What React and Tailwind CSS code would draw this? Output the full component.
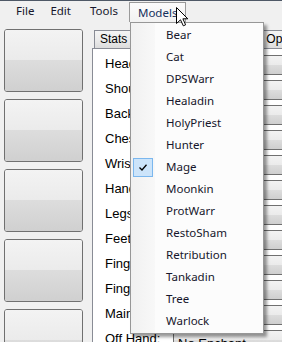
import React from "react";

const slots = [
  "Head:",
  "Shoulders:",
  "Back:",
  "Chest:",
  "Wrist:",
  "Hands:",
  "Legs:",
  "Feet:",
  "Finger 1:",
  "Finger 2:",
  "Main Hand:",
  "Off Hand:",
];

const models = [
  "Bear",
  "Cat",
  "DPSWarr",
  "Healadin",
  "HolyPriest",
  "Hunter",
  "Mage",
  "Moonkin",
  "ProtWarr",
  "RestoSham",
  "Retribution",
  "Tankadin",
  "Tree",
  "Warlock",
];

const uiFont = { fontFamily: '"Noto Sans", "Open Sans", sans-serif' };

// big empty buttons down the left side
const SideButton = () => (
  <div className="h-[63px] shrink-0 rounded-[3px] border border-[#707070] overflow-hidden flex flex-col">
    <div className="h-[30px] bg-gradient-to-b from-[#f3f3f3] to-[#ebebeb]" />
    <div className="flex-1 bg-gradient-to-b from-[#dddddd] to-[#d0d0d0]" />
  </div>
);

const Combo = ({ text }) => (
  <div className="relative h-[20px] w-[140px] shrink-0 rounded-[2px] border border-[#707070] overflow-hidden">
    <div className="absolute inset-0 flex flex-col">
      <div className="h-[9px] bg-gradient-to-b from-[#f3f3f3] to-[#ebebeb]" />
      <div className="flex-1 bg-gradient-to-b from-[#dddddd] to-[#cfcfcf]" />
    </div>
    <span className="relative pl-[4px] leading-[18px] text-[13px] text-black whitespace-nowrap">{text}</span>
  </div>
);

const App = () => {
  return (
    <div
      className="relative w-[282px] h-[342px] overflow-hidden bg-[#f0f0f0] select-none"
      style={{ fontFamily: '"Liberation Sans", Arial, sans-serif' }}
    >
      {/* menu bar */}
      <div
        className="h-[22px] border-t border-[#4e5866] flex items-end text-[11.5px] text-[#16162b] pl-[8px] whitespace-nowrap"
        style={uiFont}
      >
        <span className="h-[21px] px-[8px] leading-[20px]">File</span>
        <span className="h-[21px] px-[8px] leading-[20px]">Edit</span>
        <span className="h-[21px] px-[8px] leading-[20px] ml-[3px]">Tools</span>
        <span className="h-[20px] ml-[3px] w-[57px] pl-[8px] leading-[19px] border border-b-0 border-[#9a9a9a] bg-gradient-to-b from-[#fbfbfb] to-[#f2f2f2] text-[#142f5c]">
          Models
        </span>
      </div>

      <div className="flex">
        {/* left buttons */}
        <div className="w-[92px] shrink-0 pl-[4px] pr-[9px] pt-[7px] flex flex-col gap-[7px]">
          <SideButton />
          <SideButton />
          <SideButton />
          <SideButton />
          <SideButton />
        </div>

        {/* tab control */}
        <div className="w-[190px] shrink-0 flex flex-col">
          <div className="h-[26px] flex items-end text-[12px] text-black whitespace-nowrap">
            <div className="h-[18px] ml-[2px] px-[5px] border border-b-0 border-[#898c95] bg-gradient-to-b from-[#f4f4f4] via-[#ececec] to-[#dcdcdc] leading-[17px]">
              Stats
            </div>
            <div className="h-[18px] ml-[126px] pl-[6px] pr-[6px] border border-b-0 border-[#898c95] bg-gradient-to-b from-[#f4f4f4] via-[#ececec] to-[#dcdcdc] leading-[17px]">
              Options
            </div>
          </div>
          <div className="border-l border-t border-[#898c95] bg-white pt-[6px] flex flex-col gap-[5px]">
            {slots.map((s) => (
              <div key={s} className="h-[20px] shrink-0 flex items-center">
                <span className="w-[80px] shrink-0 pl-[12px] pb-[3px] text-[13px] text-black whitespace-nowrap">
                  {s}
                </span>
                <Combo text="No Enchant" />
              </div>
            ))}
          </div>
        </div>
      </div>

      {/* Models dropdown */}
      <div
        className="absolute left-[130px] top-[22px] w-[134px] border border-[#979797] bg-[#fcfcfc] shadow-[3px_3px_3px_rgba(0,0,0,0.4)] py-[1px]"
        style={uiFont}
      >
        <div className="absolute left-0 top-0 bottom-0 w-[24px] bg-gradient-to-r from-[#f1f1f1] to-[#f8f8f8]" />
        {models.map((m) => (
          <div key={m} className="relative h-[22px] flex items-center">
            <div className="w-[24px] h-full flex items-center justify-center">
              {m === "Mage" && (
                <div className="w-[20px] h-[19px] border border-[#7bb7ee] bg-[#cce4fa] flex items-center justify-center">
                  <svg width="8" height="7" viewBox="0 0 8 7">
                    <path d="M0.5 3.5 L3 6 L7.5 0.8" fill="none" stroke="#000" strokeWidth="1.3" />
                  </svg>
                </div>
              )}
            </div>
            <span className="pl-[11px] text-[11.5px] text-[#16162b]">{m}</span>
          </div>
        ))}
      </div>

      {/* mouse pointer */}
      <svg className="absolute left-[176px] top-[7px]" width="13" height="20" viewBox="0 0 13 20">
        <path
          d="M0.5 0.5 L0.5 16.5 L4.5 12.8 L7.3 18.8 L9.6 17.8 L6.9 11.8 L11.8 11.8 Z"
          fill="#fff"
          stroke="#000"
          strokeWidth="1"
          strokeLinejoin="miter"
        />
      </svg>
    </div>
  );
};

export default App;
